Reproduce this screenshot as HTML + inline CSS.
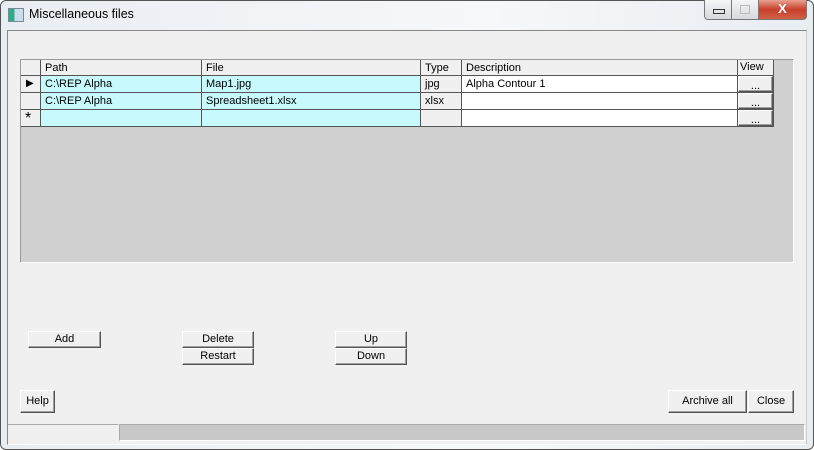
<!DOCTYPE html><html><head><style>
body{margin:0;width:814px;height:450px;overflow:hidden;font-family:"Liberation Sans",sans-serif;background:#fff}
.win{position:absolute;left:0;top:0;width:814px;height:450px;box-sizing:border-box;border:1px solid #555;border-radius:6px;background:linear-gradient(90deg,#e9eef3,#f6f8fa 60%,#e8edf2);}
.l{position:absolute;left:-1px;top:-1px;width:814px;height:450px}
.t{position:absolute;left:29px;top:7px;font-size:12.5px;color:#000}
.ico{position:absolute;left:8px;top:8px;width:14px;height:12px;border:1px solid #789;background:linear-gradient(90deg,#3a8 0 40%,#cde 40%)}
.cap{position:absolute;top:0;height:19px;border:1px solid #777;border-top:none}
.in{position:absolute;left:7px;top:30px;width:798px;height:413px;background:#f0f0f0;border:1px solid #888;border-bottom-color:#fff;border-right-color:#ccc}
.grid{position:absolute;left:20px;top:59px;width:772px;height:202px;background:#d0d0d0;border:1px solid #999;border-right-color:#fff;border-bottom-color:#fff}
.c{position:absolute;box-sizing:border-box;border-right:1px solid #555;border-bottom:1px solid #555;font-size:11px;padding:2px 4px;white-space:nowrap;overflow:hidden}
.b{position:absolute;box-sizing:border-box;background:#f0f0f0;border:1px solid;border-color:#fff #555 #555 #fff;font-size:11px;text-align:center;line-height:14px;box-shadow:inset -1px -1px #a0a0a0}
</style></head><body>
<div class="win"><div class="l">
<div class="ico"></div><div class="t">Miscellaneous files</div>
<div class="cap" style="left:704px;width:26px;border-radius:0 0 0 4px;background:linear-gradient(#f4f6f8,#d4dae0)"><div style="position:absolute;left:8px;top:9px;width:10px;height:3px;border:1px solid #333"></div></div>
<div class="cap" style="left:731px;width:26px;background:linear-gradient(#f4f6f8,#d4dae0)"><div style="position:absolute;left:8px;top:5px;width:8px;height:7px;border:1px solid #bbb"></div></div>
<div class="cap" style="left:758px;width:47px;border-radius:0 0 4px 0;background:linear-gradient(#e8a090,#c8402c 50%,#d06048);color:#fff;font-weight:bold;text-align:center;font-size:13px;line-height:18px">X</div>
<div class="in"></div>
<div class="grid">
<div class="c" style="left:0;top:0;width:20px;height:16px;background:#f0f0f0"></div>
<div class="c" style="left:20px;top:0;width:161px;height:16px;background:#f0f0f0">Path</div>
<div class="c" style="left:181px;top:0;width:219px;height:16px;background:#f0f0f0">File</div>
<div class="c" style="left:400px;top:0;width:41px;height:16px;background:#f0f0f0">Type</div>
<div class="c" style="left:441px;top:0;width:276px;height:16px;background:#f0f0f0">Description</div>
<div class="c" style="left:717px;top:0;width:36px;height:16px;background:#f0f0f0;padding:1px 2px">View</div>

<div class="c" style="left:0;top:16px;width:20px;height:17px;background:#f0f0f0;font-size:10px;padding:2px 5px">&#9654;</div>
<div class="c" style="left:20px;top:16px;width:161px;height:17px;background:#c8fafd">C:\REP Alpha</div>
<div class="c" style="left:181px;top:16px;width:219px;height:17px;background:#c8fafd">Map1.jpg</div>
<div class="c" style="left:400px;top:16px;width:41px;height:17px;background:#f0f0f0">jpg</div>
<div class="c" style="left:441px;top:16px;width:276px;height:17px;background:#fff">Alpha Contour 1</div>
<div class="c" style="left:717px;top:16px;width:36px;height:17px;background:#f0f0f0;padding:0"><div class="b" style="left:0;top:0;width:35px;height:16px;line-height:18px">...</div></div>

<div class="c" style="left:0;top:33px;width:20px;height:17px;background:#f0f0f0"></div>
<div class="c" style="left:20px;top:33px;width:161px;height:17px;background:#c8fafd">C:\REP Alpha</div>
<div class="c" style="left:181px;top:33px;width:219px;height:17px;background:#c8fafd">Spreadsheet1.xlsx</div>
<div class="c" style="left:400px;top:33px;width:41px;height:17px;background:#f0f0f0">xlsx</div>
<div class="c" style="left:441px;top:33px;width:276px;height:17px;background:#fff"></div>
<div class="c" style="left:717px;top:33px;width:36px;height:17px;background:#f0f0f0;padding:0"><div class="b" style="left:0;top:0;width:35px;height:16px;line-height:18px">...</div></div>

<div class="c" style="left:0;top:50px;width:20px;height:17px;background:#f0f0f0;font-size:16px;padding:0 4px;line-height:18px">*</div>
<div class="c" style="left:20px;top:50px;width:161px;height:17px;background:#c8fafd"></div>
<div class="c" style="left:181px;top:50px;width:219px;height:17px;background:#c8fafd"></div>
<div class="c" style="left:400px;top:50px;width:41px;height:17px;background:#f0f0f0"></div>
<div class="c" style="left:441px;top:50px;width:276px;height:17px;background:#fff"></div>
<div class="c" style="left:717px;top:50px;width:36px;height:17px;background:#f0f0f0;padding:0"><div class="b" style="left:0;top:0;width:35px;height:16px;line-height:18px">...</div></div>
</div>
<div class="b" style="left:28px;top:331px;width:73px;height:17px">Add</div>
<div class="b" style="left:182px;top:331px;width:72px;height:17px">Delete</div>
<div class="b" style="left:182px;top:348px;width:72px;height:17px">Restart</div>
<div class="b" style="left:335px;top:331px;width:72px;height:17px">Up</div>
<div class="b" style="left:335px;top:348px;width:72px;height:17px">Down</div>
<div class="b" style="left:20px;top:390px;width:35px;height:23px;line-height:21px">Help</div>
<div class="b" style="left:668px;top:390px;width:79px;height:23px;line-height:21px">Archive all</div>
<div class="b" style="left:748px;top:390px;width:46px;height:23px;line-height:21px">Close</div>
<div style="position:absolute;left:8px;top:424px;width:110px;height:17px;border-top:1px solid #aaa;background:#f0f0f0"></div>
<div style="position:absolute;left:119px;top:424px;width:686px;height:17px;background:#c8c8c8;border:1px solid #aaa;border-right-color:#fff;border-bottom-color:#fff;box-sizing:border-box"></div>
</div></div>
</body></html>
